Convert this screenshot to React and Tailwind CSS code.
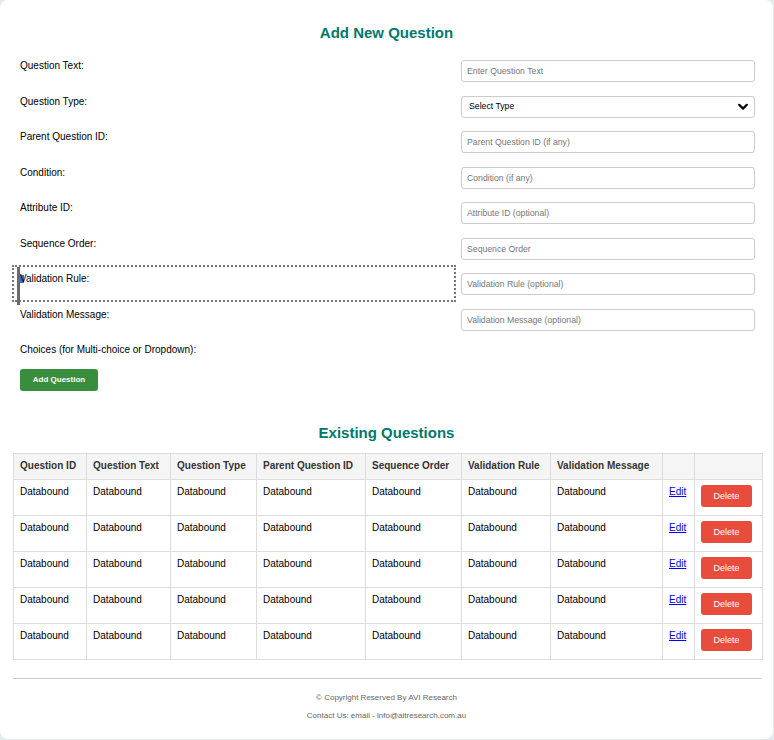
import React from "react";

const fields = [
  { label: "Question Text:", placeholder: "Enter Question Text" },
  { label: "Question Type:", select: true },
  { label: "Parent Question ID:", placeholder: "Parent Question ID (if any)" },
  { label: "Condition:", placeholder: "Condition (if any)" },
  { label: "Attribute ID:", placeholder: "Attribute ID (optional)" },
  { label: "Sequence Order:", placeholder: "Sequence Order" },
  { label: "Validation Rule:", placeholder: "Validation Rule (optional)", focus: true },
  { label: "Validation Message:", placeholder: "Validation Message (optional)" },
];

const headers = [
  "Question ID",
  "Question Text",
  "Question Type",
  "Parent Question ID",
  "Sequence Order",
  "Validation Rule",
  "Validation Message",
  "",
  "",
];

const widths = ["w-[73px]", "w-[84px]", "w-[86px]", "w-[109px]", "w-[96px]", "w-[89px]", "w-[112px]", "w-[32px]", "w-[68px]"];

export default function App() {
  return (
    <div className="min-h-screen bg-[#e2eaee] font-['Liberation_Sans',Arial,sans-serif]">
      <div className="w-[773px] h-[739px] bg-white rounded-lg pt-[24px] px-[13px]">
        <h2 className="text-[15px] leading-[18px] font-bold text-center text-[#00796b]">Add New Question</h2>

        <div className="mt-[18px] px-[7px] grid grid-cols-[436px_294px] gap-x-[5px] gap-y-[13.5px]">
          {fields.map((f) => (
            <React.Fragment key={f.label}>
              <div className="relative h-[22px] text-[10px] leading-[12px] text-black">
                {f.focus && (
                  <>
                    <div className="absolute left-[-8px] top-[-8px] w-[444px] h-[37px] border-2 border-dotted border-[#777]"></div>
                    <div className="absolute left-[-3px] top-[-6px] w-[3px] h-[38px] bg-[#6b6b6b]"></div>
                    <div className="absolute left-0 top-[2px] w-[4px] h-[8px] bg-[#2f6fd6]"></div>
                  </>
                )}
                <span className="relative">{f.label}</span>
              </div>
              {f.select ? (
                <div className="relative h-[22px]">
                  <select className="block appearance-none w-full h-[22px] border border-[#ccc] rounded-[3px] pl-[7px] text-[8.7px] text-black bg-white outline-none">
                    <option>Select Type</option>
                  </select>
                  <svg className="absolute right-[7px] top-[7px] w-[10px] h-[8px] pointer-events-none" viewBox="0 0 10 8">
                    <path d="M1.2 1.8 L5 5.6 L8.8 1.8" fill="none" stroke="#000" strokeWidth="2.2" strokeLinecap="round" strokeLinejoin="round" />
                  </svg>
                </div>
              ) : (
                <input
                  className="block w-full h-[22px] border border-[#ccc] rounded-[3px] px-[5px] text-[8.7px] text-black placeholder:text-[#777] outline-none"
                  placeholder={f.placeholder}
                />
              )}
            </React.Fragment>
          ))}
          <div className="text-[10px] leading-[12px] text-black col-span-2">Choices (for Multi-choice or Dropdown):</div>
        </div>

        <div className="px-[7px] mt-[12.5px]">
          <button className="block w-[78px] h-[22px] bg-[#388e3c] rounded-[3px] text-white text-[8px] font-bold">Add Question</button>
        </div>

        <h2 className="mt-[33px] text-[15px] leading-[18px] font-bold text-center text-[#00796b]">Existing Questions</h2>

        <table className="mt-[11px] w-[749px] border-collapse table-fixed text-[10px] leading-[12px]">
          <thead>
            <tr className="bg-[#f5f5f5]">
              {headers.map((h, i) => (
                <th key={i} className={`${widths[i]} h-[26px] border border-[#ddd] px-[6px] text-left font-bold text-[#333] align-middle`}>
                  {h}
                </th>
              ))}
            </tr>
          </thead>
          <tbody>
            {[0, 1, 2, 3, 4].map((r) => (
              <tr key={r}>
                {[0, 1, 2, 3, 4, 5, 6].map((c) => (
                  <td key={c} className="h-[36px] border border-[#ddd] px-[6px] pt-[6px] align-top text-black">
                    Databound
                  </td>
                ))}
                <td className="h-[36px] border border-[#ddd] px-[6px] pt-[6px] align-top">
                  <a href="#" className="text-[#0000ee] underline">Edit</a>
                </td>
                <td className="h-[36px] border border-[#ddd] px-[6px] pt-[5px] align-top">
                  <button className="block w-[51px] h-[22px] bg-[#e74c3c] rounded-[3px] text-white text-[9px]">Delete</button>
                </td>
              </tr>
            ))}
          </tbody>
        </table>

        <div className="mt-[18px] w-[749px] h-px bg-[#ccc]"></div>
        <div className="mt-[14px] text-center text-[8px] leading-[10px] text-[#666]">© Copyright Reserved By AVI Research</div>
        <div className="mt-[8px] text-center text-[8px] leading-[10px] text-[#666]">Contact Us: email - info@aitresearch.com.au</div>
      </div>
    </div>
  );
}
